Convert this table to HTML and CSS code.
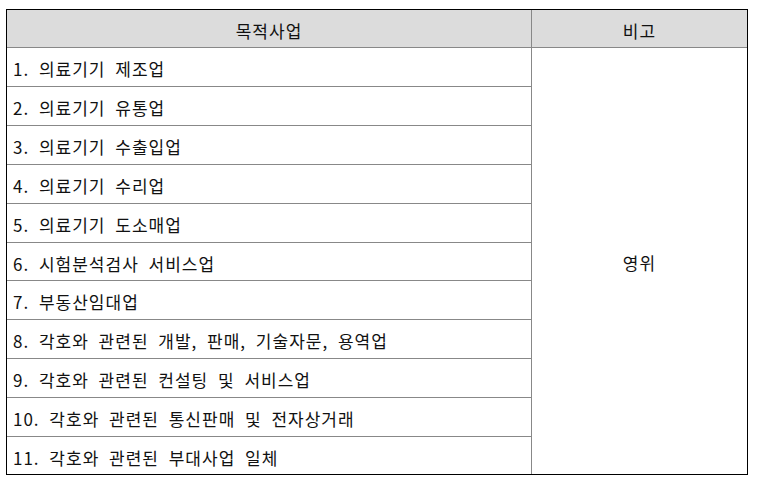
FILE: index.html
```html
<!DOCTYPE html>
<html lang="ko">
<head>
<meta charset="utf-8">
<link rel="stylesheet" href="styles.css">
</head>
<body>
<table class="biz">
  <colgroup><col class="col-main"><col class="col-note"></colgroup>
  <thead>
    <tr><th class="head">목적사업</th><th class="head last">비고</th></tr>
  </thead>
  <tbody>
    <tr><td>1. 의료기기 제조업</td><td class="note last" rowspan="11">영위</td></tr>
    <tr><td>2. 의료기기 유통업</td></tr>
    <tr><td>3. 의료기기 수출입업</td></tr>
    <tr><td>4. 의료기기 수리업</td></tr>
    <tr><td>5. 의료기기 도소매업</td></tr>
    <tr><td class="short">6. 시험분석검사 서비스업</td></tr>
    <tr><td>7. 부동산임대업</td></tr>
    <tr><td>8. 각호와 관련된 개발, 판매, 기술자문, 용역업</td></tr>
    <tr><td>9. 각호와 관련된 컨설팅 및 서비스업</td></tr>
    <tr><td>10. 각호와 관련된 통신판매 및 전자상거래</td></tr>
    <tr><td class="end">11. 각호와 관련된 부대사업 일체</td></tr>
  </tbody>
</table>
</body>
</html>
```
FILE: styles.css
```css
html, body {
  margin: 0;
  padding: 0;
  background: #ffffff;
}
body {
  padding: 9px 0 0 6px;
  font-family: "Noto Sans CJK KR", "Noto Sans", sans-serif;
  font-size: 17px;
  color: #111;
}
.biz {
  border-collapse: separate;
  border-spacing: 0;
  border: 1px solid #000;
  width: 742px;
  table-layout: fixed;
}
.col-main { width: 525px; }
.biz th, .biz td {
  box-sizing: border-box;
  border: 0;
  border-right: 1px solid #888;
  border-bottom: 1px solid #888;
  height: 39px;
  padding: 4px 0 0 6px;
  font-weight: normal;
  text-align: left;
  vertical-align: middle;
  line-height: 20px;
  letter-spacing: 1px;
  word-spacing: 4px;
  white-space: nowrap;
}
.biz th.head {
  height: 38px;
  background: #dcdcdc;
  text-align: center;
  padding-left: 0;
}
.biz .last { border-right: 0; }
.biz td.short { height: 38px; }
.biz td.end { height: 37px; border-bottom: 0; }
.biz td.note {
  border-bottom: 0;
  text-align: center;
  padding-left: 0;
}
```
